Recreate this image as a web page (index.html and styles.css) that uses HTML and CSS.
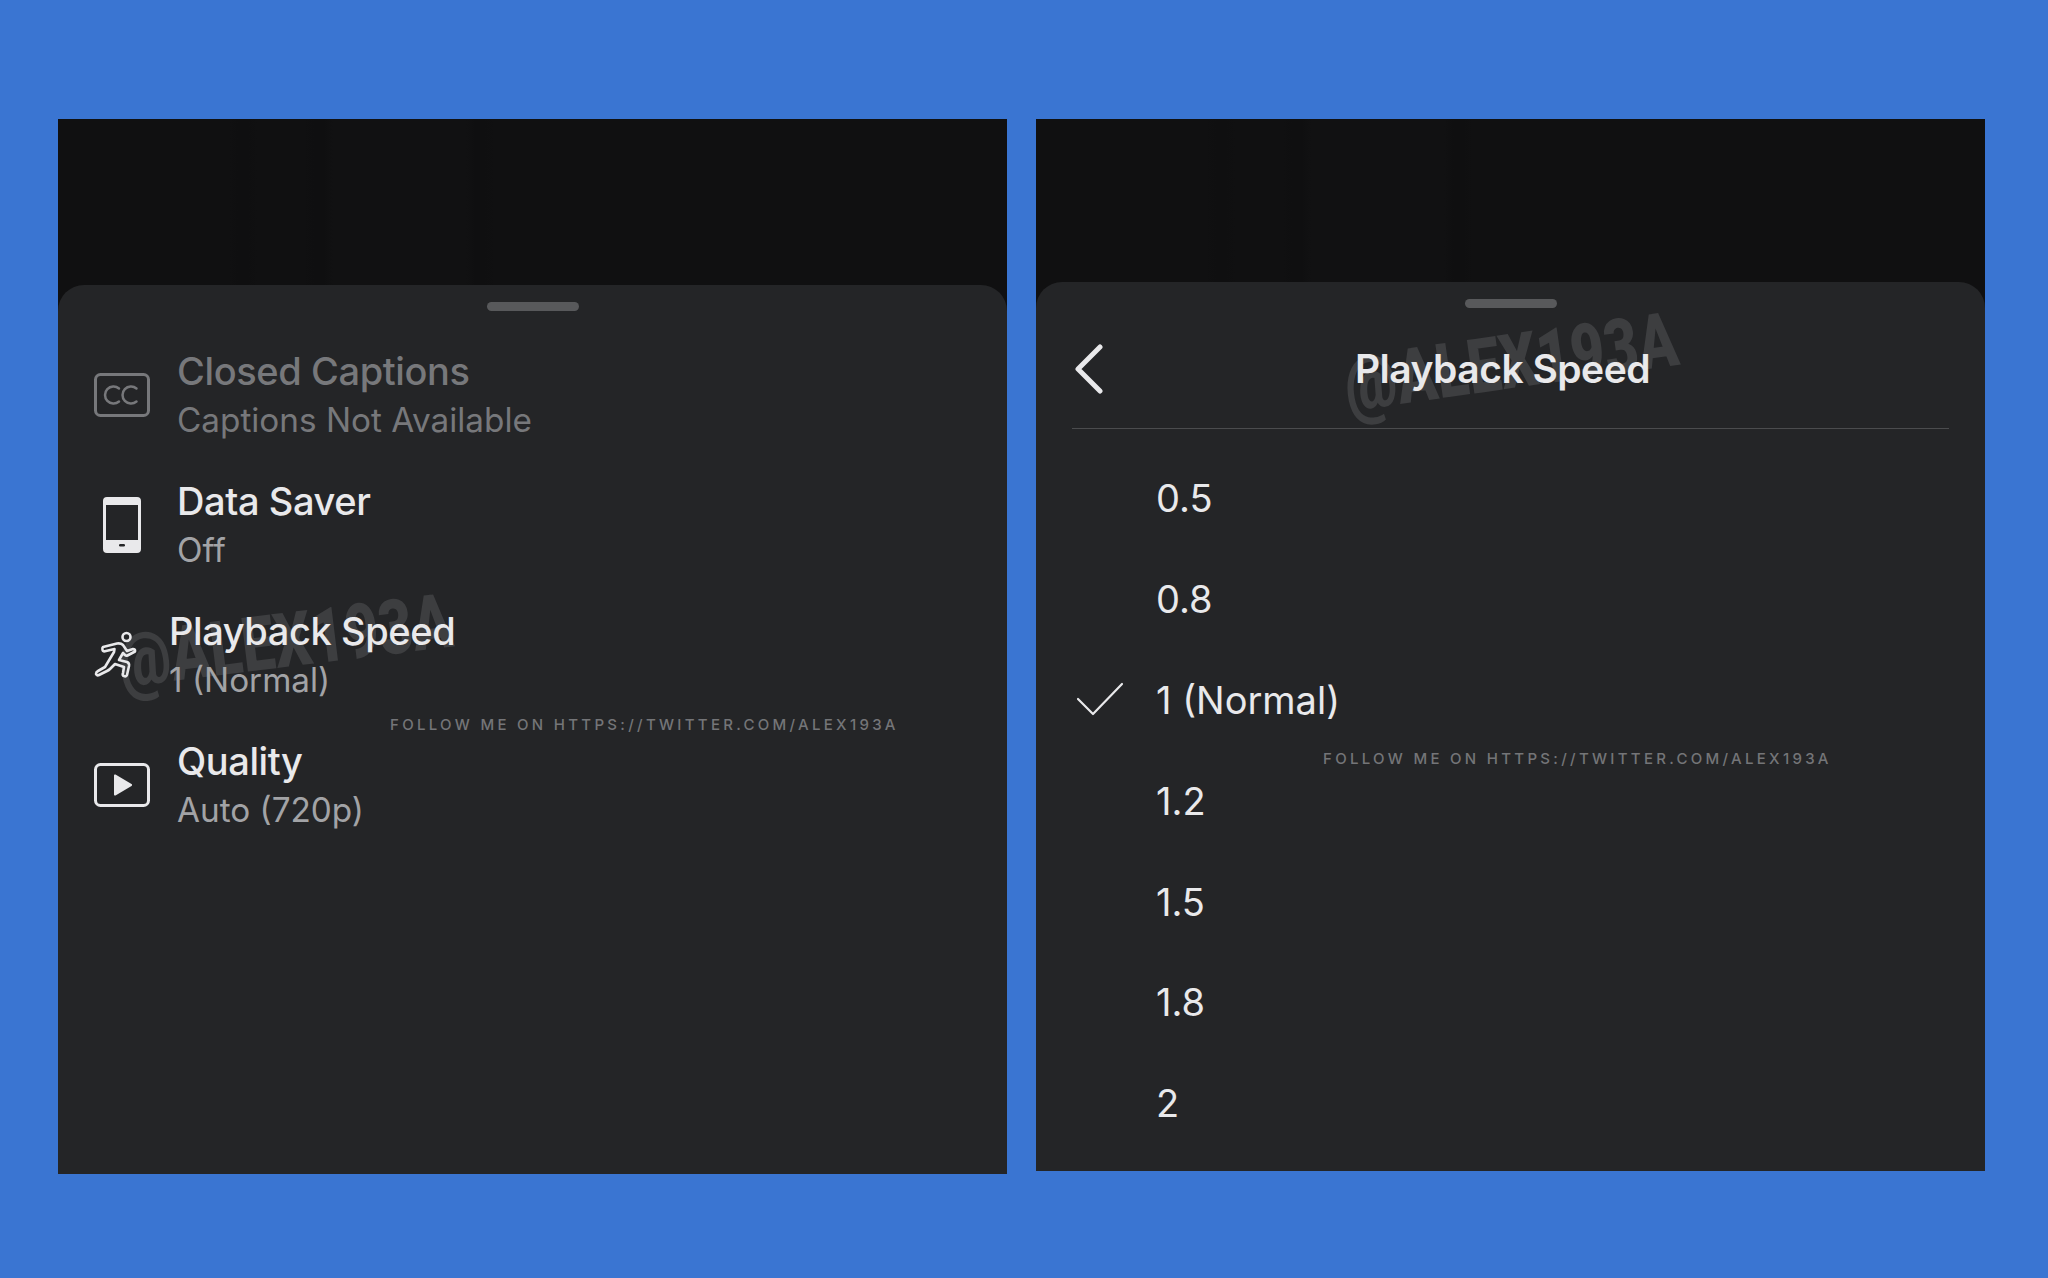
FILE: index.html
```html
<!DOCTYPE html>
<html lang="en">
<head>
  <meta charset="UTF-8">
  <title>Playback Speed</title>
  <link rel="stylesheet" href="styles.css">
</head>
<body>
  <div class="screens">

    <div class="phone phone-left">
      <div class="video-area"></div>
      <div class="sheet">
        <div class="handle"></div>
        <span class="mark mark-left">@ALEX193A</span>
        <span class="follow follow-left">FOLLOW ME ON HTTPS://TWITTER.COM/ALEX193A</span>

        <div class="menu">
          <div class="menu-row disabled">
            <svg class="icon" width="56" height="44" viewBox="0 0 56 44" fill="none" stroke="currentColor" stroke-width="3">
              <rect x="1.500" y="1.500" width="53" height="41" rx="5"/>
              <path d="M25 15.500a8.500 8.500 0 1 0 0 13M42.500 15.500a8.500 8.500 0 1 0 0 13" stroke-width="2.500" stroke-linecap="round"/>
            </svg>
            <div class="menu-text">
              <div class="menu-title">Closed Captions</div>
              <div class="menu-sub">Captions Not Available</div>
            </div>
          </div>

          <div class="menu-row">
            <svg class="icon" width="56" height="56" viewBox="0 0 56 56">
              <path fill="currentColor" fill-rule="evenodd" d="M13 0h30a4 4 0 0 1 4 4v48a4 4 0 0 1-4 4H13a4 4 0 0 1-4-4V4a4 4 0 0 1 4-4zM12 8v35h32V8z"/>
              <rect x="25" y="47" width="6" height="2.500" rx="1.200" fill="#242527"/>
            </svg>
            <div class="menu-text">
              <div class="menu-title">Data Saver</div>
              <div class="menu-sub">Off</div>
            </div>
          </div>

          <div class="menu-row runner">
            <svg class="icon" width="56" height="60" viewBox="4 0 56 60" fill="none" stroke="currentColor" stroke-width="2.600" stroke-linejoin="round" stroke-linecap="round">
              <circle cx="36.500" cy="12" r="4"/>
              <path d="M13 22L27 18.500Q31 18 33 20L37 26L43 24Q45.500 24 45 26.500L37.500 30.500Q36 31 35 30L33 28L29 35L37 37Q39.500 38 39 41L37 50Q36 52 34 51Q32 50.500 33 48L34 42L25 39L20 44Q19 45 17 46L9 50Q7 51 6 49Q6 47 8 46L15 42L24 27L24.500 24L16 26Q13 27 12.500 25Q12 23 13 22Z"/>
            </svg>
            <div class="menu-text">
              <div class="menu-title">Playback Speed</div>
              <div class="menu-sub">1 (Normal)</div>
            </div>
          </div>

          <div class="menu-row">
            <svg class="icon" width="56" height="44" viewBox="0 0 56 44" fill="none" stroke="currentColor" stroke-width="3">
              <rect x="1.500" y="1.500" width="53" height="41" rx="5"/>
              <path d="M20 12.500a1 1 0 0 1 1.500-.9l16 9.500a1 1 0 0 1 0 1.800l-16 9.500a1 1 0 0 1-1.500-.9z" fill="currentColor" stroke="none"/>
            </svg>
            <div class="menu-text">
              <div class="menu-title">Quality</div>
              <div class="menu-sub">Auto (720p)</div>
            </div>
          </div>
        </div>
      </div>
    </div>

    <div class="phone phone-right">
      <div class="video-area video-short"></div>
      <div class="sheet">
        <div class="handle"></div>
        <span class="mark mark-right">@ALEX193A</span>
        <span class="follow follow-right">FOLLOW ME ON HTTPS://TWITTER.COM/ALEX193A</span>

        <div class="speed-header">
          <svg class="back" width="30" height="50" viewBox="0 0 30 50" fill="none" stroke="currentColor" stroke-width="5" stroke-linecap="round" stroke-linejoin="round">
            <path d="M26 3L4 25l22 22"/>
          </svg>
          <h2 class="speed-title">Playback Speed</h2>
        </div>

        <ul class="speed-list">
          <li class="speed-item">0.5</li>
          <li class="speed-item">0.8</li>
          <li class="speed-item selected">
            <svg class="check" width="48" height="34" viewBox="0 0 48 34" fill="none" stroke="currentColor" stroke-width="2.200" stroke-linecap="round" stroke-linejoin="round">
              <path d="M2 17l15 15L46 2"/>
            </svg>
            1 (Normal)
          </li>
          <li class="speed-item">1.2</li>
          <li class="speed-item">1.5</li>
          <li class="speed-item">1.8</li>
          <li class="speed-item">2</li>
        </ul>
      </div>
    </div>

  </div>
</body>
</html>
```

FILE: styles.css
```css
* {
  box-sizing: border-box;
}

body {
  margin: 0;
  height: 1278px;
  overflow: hidden;
  background-color: #3a75d2;
  font-family: Inter, "Liberation Sans", sans-serif;
  color: #e9e9eb;
}

.screens {
  display: flex;
  align-items: flex-start;
  gap: 29px;
  padding: 119px 0 0 58px;
}

.phone {
  display: flex;
  flex-direction: column;
  width: 949px;
  background-color: #101011;
}

.phone-left {
  height: 1055px;
}

.phone-right {
  height: 1052px;
}

.video-area {
  flex: 0 0 166px;
  background-image: linear-gradient(90deg, #101011 0 18%, #0f0f10 19% 20%, #101011 21% 26%, #0f0f10 27% 28%, #111112 29% 43%, #0f0f10 44% 45%, #101011 46% 100%);
}

.video-short {
  flex-basis: 163px;
}

.sheet {
  position: relative;
  flex: 1;
  background-color: #242527;
  border-radius: 26px 26px 0 0;
}

.handle {
  width: 92px;
  height: 9px;
  margin: 17px auto 0;
  border-radius: 5px;
  background-color: #58595b;
}

.mark {
  position: absolute;
  font-family: Roboto, sans-serif;
  font-weight: 900;
  font-size: 76px;
  line-height: 90px;
  color: #3d3e40;
  white-space: nowrap;
  transform-origin: left bottom;
}

.mark-left {
  left: 66px;
  top: 331px;
  transform: rotate(-7deg) scaleX(0.77);
}

.mark-right {
  left: 315px;
  top: 58px;
  transform: rotate(-8deg) scaleX(0.77);
}

.follow {
  position: absolute;
  font-family: Inter, sans-serif;
  font-weight: 500;
  font-size: 15px;
  line-height: 16px;
  letter-spacing: 3.3px;
  color: #747578;
  white-space: nowrap;
}

.follow-left {
  left: 332px;
  top: 432px;
}

.follow-right {
  left: 287px;
  top: 469px;
}

/* settings list */
.menu {
  position: relative;
  display: flex;
  flex-direction: column;
  margin-top: 19px;
}

.menu-row {
  display: flex;
  align-items: center;
  height: 130px;
  padding-left: 36px;
  color: #e9e9eb;
}

.menu-row .icon {
  flex: none;
  margin-right: 27px;
}

.menu-row.runner .menu-text {
  margin-left: -8px;
}

.menu-title {
  font-size: 38px;
  font-weight: 450;
  line-height: 48px;
  letter-spacing: -0.4px;
}

.menu-sub {
  margin-top: 1px;
  font-size: 33.3px;
  line-height: 48px;
  color: #a2a3a6;
}

.disabled,
.disabled .menu-sub {
  color: #77787b;
}

/* speed picker */
.speed-header {
  position: relative;
  display: flex;
  align-items: center;
  justify-content: center;
  height: 121px;
  margin: 0 36px;
  border-bottom: 1px solid #4b4c4e;
}

.back {
  position: absolute;
  left: 2px;
  top: 36px;
}

.speed-title {
  margin: 0 16px 0 0;
  font-size: 39px;
  font-weight: 600;
  letter-spacing: -0.5px;
}

.speed-list {
  position: relative;
  list-style: none;
  margin: 0;
  padding: 19px 0 0;
}

.speed-item {
  position: relative;
  display: flex;
  align-items: center;
  height: 100.8px;
  padding-left: 120px;
  font-size: 38px;
}

.check {
  position: absolute;
  left: 40px;
  top: 32px;
}
```
